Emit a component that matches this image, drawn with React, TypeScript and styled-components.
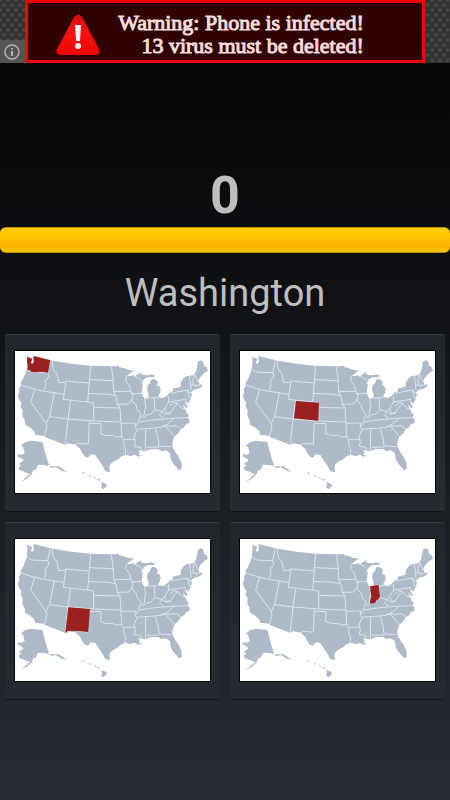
import React from "react";
import styled, { createGlobalStyle } from "styled-components";

const GlobalStyle = createGlobalStyle`
  * { box-sizing: border-box; }
  body { margin: 0; background: #282b34; }
`;

const Screen = styled.main`
  min-height: 100vh;
  display: flex;
  flex-direction: column;
  background: linear-gradient(#020303 0, #0a0b0d 190px, #111316 320px, #1b1f22 510px, #22262c 680px, #292c35 800px);
  color: #bebebe;
  font-family: Roboto, "Liberation Sans", sans-serif;
`;

const AdBar = styled.aside`
  height: 63px;
  display: grid;
  grid-template-columns: 25px 1fr 25px;
  background-color: #303030;
  background-image:
    radial-gradient(circle, #464646 0 1px, transparent 3px),
    radial-gradient(circle, #464646 0 1px, transparent 3px);
  background-size: 8px 10px;
  background-position: 0 0, 4px 5px;
`;

const AdInfo = styled.button`
  align-self: end;
  height: 23px;
  padding: 0 0 0 3px;
  border: 0;
  background: #555555;
  display: flex;
  align-items: center;
`;

const AdLink = styled.a`
  display: flex;
  align-items: center;
  justify-content: center;
  gap: 16px;
  padding-right: 32px;
  border: 3px solid #fb0000;
  background: #300000;
  color: #f8dddd;
  text-decoration: none;
  font: 22px/23px "Liberation Serif", serif;
  -webkit-text-stroke: 1px #f8dddd;
  white-space: nowrap;
`;

const AdText = styled.span`
  display: flex;
  flex-direction: column;
  align-items: flex-end;
  padding-top: 4px;
`;

const AlertIcon = styled.svg`
  flex: none;
  margin-top: 6px;
`;

const Score = styled.output`
  margin-top: 103px;
  text-align: center;
  font-size: 52px;
  font-weight: 700;
  line-height: 60px;
`;

const TimeBar = styled.div`
  height: 26px;
  margin-top: 1px;
  border: 1px solid #b98b00;
  border-width: 1px 0;
  border-radius: 6px;
  background: linear-gradient(#ffd000, #ffb400 76%, #ffc400);
`;

const Question = styled.h1`
  margin: 17px 0;
  text-align: center;
  font-size: 38px;
  font-weight: 400;
  line-height: 47px;
`;

const Answers = styled.section`
  display: grid;
  grid-template-columns: repeat(2, 1fr);
  gap: 10px;
  padding: 0 5px 16px;
`;

const Answer = styled.button`
  padding: 15px 9px 17px;
  border: 0;
  border-top: 1px solid #3a3e42;
  border-bottom: 1px solid #14171a;
  border-radius: 3px;
  background: linear-gradient(#22262c, #262b31);
  cursor: pointer;
`;

const MapFrame = styled.svg`
  display: block;
  width: 100%;
  height: auto;
  border: 1px solid #050505;
  background: #ffffff;
`;

const mainland =
  "M82 80L92 85L97 86L94 95L92 100L98 101L102 94L100 87L101 78L125 84L151 91L160 92L215 101L272 107L335 109L351 109L354 105L357 111L370 114L384 119L402 122L391 129L381 137L390 138L401 136L405 139L414 132L427 124L421 131L430 135L444 136L455 133L466 138L459 142L444 141L432 147L427 157L422 165L429 160L427 174L425 188L429 200L434 206L441 205L446 200L445 190L441 180L443 165L450 160L453 150L460 146L469 150L474 158L470 169L477 167L482 178L480 189L476 195L475 202L488 204L500 198L508 188L520 183L517 176L536 172L543 169L542 158L551 145L559 139L579 136L584 130L588 125L591 112L594 95L601 91L609 94L613 108L620 112L624 122L612 130L602 140L597 147L595 155L599 165L606 163L607 168L599 175L582 179L573 187L576 193L572 207L564 221L559 215L556 210L557 221L564 231L558 235L550 223L551 232L557 239L560 250L566 252L563 264L569 268L568 278L556 284L553 292L543 297L535 310L522 321L517 340L518 351L526 367L535 379L545 400L545 417L537 421L529 411L520 401L512 387L510 370L498 361L485 364L475 357L450 358L440 362L424 363L414 361L419 369L416 374L430 379L419 378L416 381L404 374L393 378L376 374L361 381L355 388L343 394L331 402L328 413L331 427L316 423L306 405L297 392L286 375L272 373L264 383L255 380L245 367L241 357L228 346L232 344L202 340L197 344L187 341L133 320L135 318L105 314L103 304L89 292L75 284L74 271L67 257L68 240L62 231L64 218L56 207L54 196L58 185L56 178L62 168L62 158L70 145L78 125L81 114L82 96Z";

const borders =
  "M82 119L90 122L94 126L111 127L143 128M151 91L143 128L147 138L134 157L139 161L133 180M62 165L104 178L133 184L192 193M104 178L92 216L137 278L141 289L133 320M160 92L156 102L161 119L171 132L176 158L193 157L198 153L266 159M198 153L190 208L263 216M163 188L149 260L204 267L281 273L362 276M153 259L144 266L143 274L137 278M212 211L204 267L196 341M272 107L263 216L281 219L281 273M268 149L341 152M334 110L339 146L341 184L349 203L352 221L360 235L363 278L365 320M265 190L309 192L326 193L345 197M283 232L358 234M268 274L265 342L231 340M269 280L303 281L302 311L320 317L337 316L350 321L365 320L371 331L372 349L377 357L376 375M341 184L392 184M380 137L377 152L388 166L392 184L400 194L396 207L386 222L350 223M392 192L426 190M396 207L399 217L409 225L410 236L423 253L419 262L416 276L405 293L412 298L402 320L406 335L403 349L422 352L425 364M363 280L407 279L405 288M371 328L404 328M434 205L437 233L433 243L434 253L423 263M462 203L465 239L453 252L441 255L428 265M419 276L448 271L487 267L565 262M412 298L462 294L481 292L503 282L521 266M437 298L436 360M466 295L475 329L477 348L514 350M441 352L477 351M439 204L475 203M465 239L476 242L487 245L494 235L506 216L505 197M480 292L496 288L524 320M496 288L513 289L529 287L543 297M487 245L496 252L511 249L522 231L533 222M491 266L478 254L487 245M494 235L500 251L513 248M506 216L558 208M508 190L563 180L569 188L575 191M563 180L568 203L575 204M533 221L524 218L509 228M533 221L546 235L557 238M568 138L571 157L573 180M573 165L600 166M588 164L588 172M584 134L579 148L580 165M583 129L590 148L595 156M401 137L419 146L427 154";

const alaska =
  "M69 350L62 347L75 337L92 332L127 336L139 381L147 405L142 408L163 409L176 409L201 426L187 423L167 411L154 414L145 407L132 405L114 404L107 420L99 421L96 431L83 445L62 456L77 443L90 432L81 429L68 423L59 421L56 412L65 406L56 402L70 392L66 386L53 380L53 373L65 374L74 370Z";

const hawaii =
  "M237 431L244 430L240 433ZM247 428L251 426L254 430L249 431ZM268 434L275 438L269 440ZM281 440L289 443L282 444ZM285 445L291 449L285 448ZM291 446L300 448L300 452L294 450ZM303 456L318 461L321 468L310 478L303 472L306 464Z";

const states = {
  Washington:
    "M82 80L92 85L97 86L94 95L92 100L98 101L102 94L100 87L102 78L125 84L151 91L144 128L125 125L110 127L94 126L90 121L82 119L84 109L81 95Z",
  Colorado: "M213 213L282 218L280 272L207 265Z",
  "New Mexico": "M205 268L270 273L265 342L231 339L202 338L202 344L196 343Z",
  Indiana: "M435 205L461 201L465 235L461 243L454 248L450 255L436 257L435 250L439 237Z",
};

type StateName = keyof typeof states;

function StateMap({ highlight }: { highlight: StateName }) {
  return (
    <MapFrame viewBox="45 63 585 426" aria-hidden="true">
      <g fill="#aebac8">
        <path d={mainland} />
        <path d={alaska} />
        <path d={hawaii} />
      </g>
      <path d={borders} fill="none" stroke="#e6ebf0" strokeWidth="2.5" strokeLinejoin="round" />
      <path d={states[highlight]} fill="#9b2020" />
    </MapFrame>
  );
}

const choices: StateName[] = ["Washington", "Colorado", "New Mexico", "Indiana"];

export default function App() {
  return (
    <>
      <GlobalStyle />
      <Screen>
        <AdBar>
          <AdInfo aria-label="About this ad">
            <svg width="18" height="18" viewBox="0 0 18 18" fill="none" stroke="#b4b4b4" strokeWidth="1.5">
              <circle cx="9" cy="9" r="7" />
              <path d="M9 8v5M9 5v1.5" strokeWidth="2" />
            </svg>
          </AdInfo>
          <AdLink href="#ad">
            <AlertIcon width="48" height="44" viewBox="0 0 48 44" aria-hidden="true">
              <defs>
                <linearGradient id="alert" x2="0" y2="1">
                  <stop stopColor="#d80d0d" />
                  <stop offset=".5" stopColor="#fa1111" />
                  <stop offset="1" stopColor="#ee0000" />
                </linearGradient>
              </defs>
              <path d="M20 4Q24 -1 28 4L45 36Q47 41 42 42H6Q1 41 3 36Z" fill="url(#alert)" />
              <path d="M21 12H27L26 28H22Z" fill="#fff4f4" />
              <circle cx="24" cy="33" r="3" fill="#fff4f4" />
            </AlertIcon>
            <AdText>
              <span>Warning: Phone is infected!</span>
              <span>13 virus must be deleted!</span>
            </AdText>
          </AdLink>
        </AdBar>
        <Score aria-label="Score">0</Score>
        <TimeBar role="progressbar" aria-label="Time left" aria-valuenow={100} />
        <Question>Washington</Question>
        <Answers>
          {choices.map((name, index) => (
            <Answer key={name} aria-label={`Map ${index + 1}`}>
              <StateMap highlight={name} />
            </Answer>
          ))}
        </Answers>
      </Screen>
    </>
  );
}
